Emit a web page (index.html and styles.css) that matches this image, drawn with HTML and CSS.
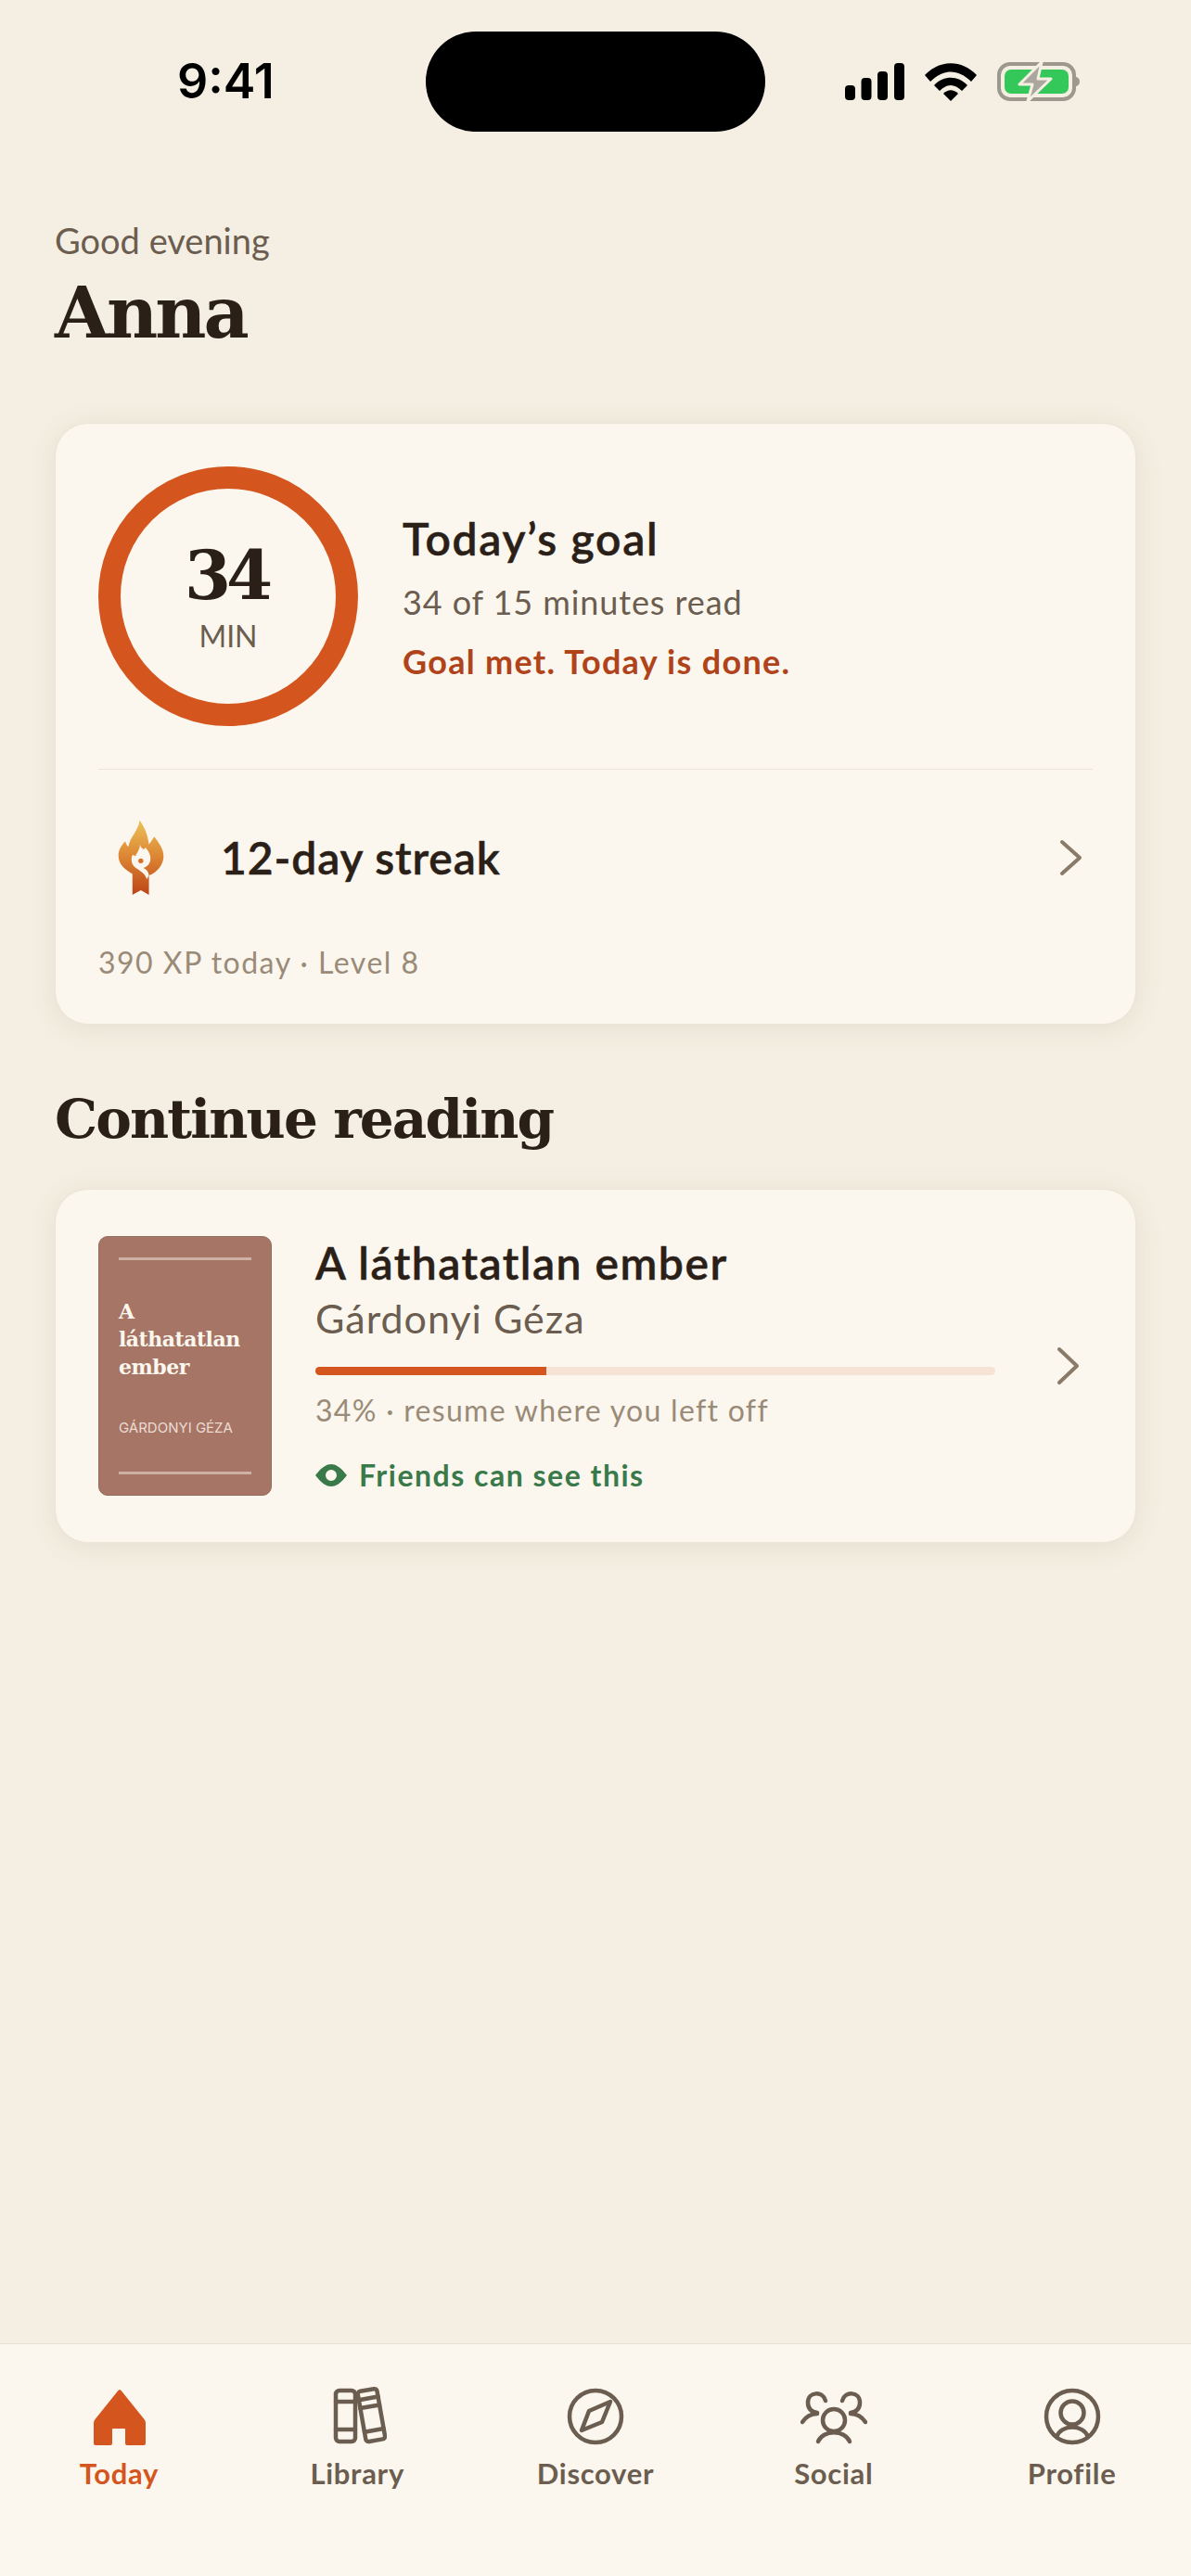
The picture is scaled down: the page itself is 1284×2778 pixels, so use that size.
FILE: index.html
```html
<!DOCTYPE html>
<html>
<head>
  <meta charset="UTF-8">
  <title>Today</title>
  <link rel="stylesheet" href="styles.css">
</head>
<body>
  <div class="status-bar">
    <div class="clock">9:41</div>
    <div class="island"></div>
    <div class="status-icons">
      <svg width="64" height="40" viewBox="0 0 64 40"><rect x="0" y="24" width="11" height="16" rx="4"/><rect x="17.500" y="16" width="11" height="24" rx="4"/><rect x="35" y="9" width="11" height="31" rx="4"/><rect x="53" y="0" width="11" height="40" rx="4"/></svg>
      <svg width="56" height="42" viewBox="0 0 56 42"><path d="M0 14 C16 -3 40 -3 56 14 L50 21 C36 7 20 7 6 21 Z"/><path d="M10 25 C20 14 36 14 46 25 L40 31 C32 23 24 23 16 31 Z"/><path d="M20 34 C25 29 31 29 36 34 L28 42 Z"/></svg>
      <svg width="90" height="44" viewBox="0 0 90 44">
        <rect x="2" y="3" width="81" height="38" rx="12" fill="none" stroke="#9c988e" stroke-width="4"/>
        <rect x="8" y="9" width="69" height="26" rx="7" fill="#34c759"/>
        <path d="M83 16 C87 17 89 19 89 22 C89 25 87 27 83 28 Z" fill="#9c988e"/>
        <path d="M48 1 L24 25 L38 25 L33 43 L58 19 L44 19 Z" fill="#aca79e" stroke="#f5efe3" stroke-width="3" stroke-linejoin="round"/>
      </svg>
    </div>
  </div>

  <header class="greeting">
    <div class="hello">Good evening</div>
    <h1 class="name">Anna</h1>
  </header>

  <section class="card goal-card">
    <div class="goal-top">
      <div class="ring">
        <div class="ring-num">34</div>
        <div class="ring-unit">MIN</div>
      </div>
      <div class="goal-text">
        <div class="goal-title">Today’s goal</div>
        <div class="goal-sub">34 of 15 minutes read</div>
        <div class="goal-done">Goal met. Today is done.</div>
      </div>
    </div>
    <div class="streak-row">
      <svg class="flame" width="52" height="84" viewBox="80 68 155 250">
        <defs>
          <linearGradient id="flameFill" x1="0" y1="0" x2="0" y2="1">
            <stop offset="0" stop-color="#ecc258"/>
            <stop offset="0.5" stop-color="#dc8433"/>
            <stop offset="1" stop-color="#bb4516"/>
          </linearGradient>
        </defs>
        <path fill="url(#flameFill)" d="M153 72 C165 90 178 110 183 150 C190 142 195 132 200 125 C215 145 231 165 230 190 C229 215 210 240 183 250 L183 312 L157 297 L130 312 L130 245 C105 230 85 215 85 185 C85 165 98 150 107 140 C110 150 113 155 117 157 C122 125 150 105 153 72 Z"/>
        <path fill="#fbf7ee" d="M154 150 C158 165 168 170 172 160 C185 175 192 190 186 207 C182 218 172 224 165 226 C175 230 182 238 183 250 L176 262 C172 245 155 235 140 225 C130 218 125 205 128 190 C130 180 135 185 140 188 C145 175 155 165 154 150 Z"/>
        <circle cx="157" cy="203" r="8" fill="#d9702a"/>
      </svg>
      <div class="streak-label">12-day streak</div>
      <svg class="chevron" width="26" height="40" viewBox="0 0 26 40"><path d="M3 3 L22 20 L3 37"/></svg>
    </div>
    <div class="xp-line">390 XP today · Level 8</div>
  </section>

  <h2 class="section-title">Continue reading</h2>

  <section class="card book-card">
    <div class="cover">
      <div class="cover-rule"></div>
      <div class="cover-body">
        <div class="cover-title">A<br>láthatatlan<br>ember</div>
        <div class="cover-author">GÁRDONYI GÉZA</div>
      </div>
      <div class="cover-rule"></div>
    </div>
    <div class="book-info">
      <div class="book-title">A láthatatlan ember</div>
      <div class="book-author">Gárdonyi Géza</div>
      <div class="progress"><div class="progress-fill" style="width: 34%"></div></div>
      <div class="book-meta">34% · resume where you left off</div>
      <div class="visibility">
        <svg width="34" height="24" viewBox="0 0 34 24"><path fill-rule="evenodd" d="M0 12 C7 3 12 0 17 0 C22 0 27 3 34 12 C27 21 22 24 17 24 C12 24 7 21 0 12 Z M17 6 A6 6 0 1 0 17 18 A6 6 0 1 0 17 6 Z"/></svg>
        <span>Friends can see this</span>
      </div>
    </div>
    <svg class="chevron" width="26" height="42" viewBox="0 0 26 42"><path d="M3 3 L22 21 L3 39"/></svg>
  </section>

  <nav class="tabbar">
    <div class="tab active">
      <svg width="64" height="64" viewBox="0 0 64 64"><path class="solid" d="M33 4 Q34 4 35 5.500 L59.500 36 Q61 38 61 40 L61 62 Q61 64 59 64 L41 64 Q39 64 39 62 L39 47 Q39 46 38 46 L26 46 Q25 46 25 47 L25 62 Q25 64 23 64 L7 64 Q5 64 5 62 L5 40 Q5 38 6.500 36 L31 5.500 Q32 4 33 4 Z"/></svg>
      <div class="tab-label">Today</div>
    </div>
    <div class="tab">
      <svg width="64" height="64" viewBox="0 0 64 64"><g class="line">
        <rect x="9" y="5" width="21" height="55" rx="4"/>
        <path d="M9 17 H30 M9 47 H30"/>
        <g transform="rotate(-10 48 32)">
          <rect x="37" y="4" width="21" height="55" rx="3"/>
          <path d="M37 13 H58 M37 22 H58 M37 48 H58"/>
        </g>
      </g></svg>
      <div class="tab-label">Library</div>
    </div>
    <div class="tab">
      <svg width="64" height="64" viewBox="0 0 64 64"><g class="line">
        <circle cx="32" cy="33" r="28"/>
        <path stroke-linejoin="round" d="M48 17 L39 39 L17 48 L25 27 Z"/>
      </g></svg>
      <div class="tab-label">Discover</div>
    </div>
    <div class="tab">
      <svg width="72" height="64" viewBox="0 0 72 64"><g class="line">
        <circle cx="36" cy="37" r="12"/>
        <path d="M19 60 C24 47 48 47 53 60"/>
        <path d="M27 16 C24 5 8 6 8 18 C8 25 12 28 18 29"/>
        <path d="M2 39 C6 33 11 30 18 30"/>
        <path d="M45 16 C48 5 64 6 64 18 C64 25 60 28 54 29"/>
        <path d="M70 39 C66 33 61 30 54 30"/>
      </g></svg>
      <div class="tab-label">Social</div>
    </div>
    <div class="tab">
      <svg width="64" height="64" viewBox="0 0 64 64"><g class="line">
        <circle cx="32" cy="33" r="28"/>
        <circle cx="32" cy="29" r="12.500"/>
        <path d="M15 55 C20 41 44 41 49 55"/>
      </g></svg>
      <div class="tab-label">Profile</div>
    </div>
  </nav>
</body>
</html>
```

FILE: styles.css
```css
* {
  box-sizing: border-box;
}
body {
  margin: 0;
  width: 1284px;
  height: 2778px;
  display: flex;
  flex-direction: column;
  background: #f5efe3;
  color: #2a2018;
  font-family: Lato, "Noto Sans", sans-serif;
  overflow: hidden;
}

/* status bar */
.status-bar {
  display: grid;
  grid-template-columns: 459px 366px 1fr;
  padding-top: 34px;
}
.clock {
  padding-left: 191px;
  font-family: Inter, sans-serif;
  font-weight: 600;
  font-size: 52px;
  line-height: 108px;
  color: #000;
}
.island {
  height: 108px;
  border-radius: 54px;
  background: #000;
}
.status-icons {
  display: flex;
  align-items: center;
  gap: 22px;
  padding-left: 86px;
}

/* greeting */
.greeting {
  padding: 92px 59px 0;
}
.hello {
  font-size: 38px;
  line-height: 50px;
  color: #6b5d4f;
}
.name {
  margin: 4px 0 0;
  font-family: "DejaVu Serif", serif;
  font-weight: 700;
  font-size: 76px;
  line-height: 100px;
  letter-spacing: -3px;
}

/* cards */
.card {
  margin: 0 59px;
  border: 1px solid #ece5d6;
  border-radius: 36px;
  background: #fbf7ee;
  box-shadow: 0 4px 30px rgba(90, 70, 40, 0.1);
}
.goal-card {
  margin-top: 68px;
  height: 649px;
  padding: 46px 46px 0;
}
.goal-top {
  display: flex;
  align-items: center;
  gap: 48px;
  height: 327px;
  padding-bottom: 46px;
  border-bottom: 1px solid #ebe4d4;
}
.ring {
  flex: none;
  width: 280px;
  height: 280px;
  border: 24px solid #d4561e;
  border-radius: 50%;
  display: flex;
  flex-direction: column;
  align-items: center;
  justify-content: center;
}
.ring-num {
  margin-left: -4px;
  font-family: "DejaVu Serif", serif;
  font-weight: 700;
  font-size: 72px;
  line-height: 82px;
  letter-spacing: -5px;
}
.ring-unit {
  margin-top: 4px;
  font-size: 32px;
  line-height: 40px;
  color: #6b5d4f;
}
.goal-title {
  font-weight: 600;
  font-size: 48px;
  line-height: 60px;
  letter-spacing: 1.7px;
  -webkit-text-stroke: 0.5px #2a2018;
}
.goal-sub {
  margin-top: 15px;
  font-size: 36px;
  line-height: 46px;
  letter-spacing: 0.9px;
  color: #6b5d4f;
}
.goal-done {
  margin-top: 18px;
  font-weight: 700;
  font-size: 36px;
  line-height: 46px;
  letter-spacing: 1.3px;
  color: #b0431a;
}
.streak-row {
  display: flex;
  align-items: center;
  height: 189px;
  padding-left: 20px;
}
.streak-label {
  margin-left: 60px;
  font-weight: 600;
  font-size: 48px;
  letter-spacing: 0.9px;
  -webkit-text-stroke: 0.5px #2a2018;
}
.streak-row .chevron {
  margin-right: 10px;
}
.chevron {
  margin-left: auto;
  fill: none;
  stroke: #8a7a68;
  stroke-width: 4;
  stroke-linecap: round;
  stroke-linejoin: round;
}
.xp-line {
  margin-top: -1px;
  font-size: 32px;
  line-height: 40px;
  letter-spacing: 1.5px;
  color: #9a8a78;
}

.section-title {
  margin: 63px 59px 36px;
  font-family: "DejaVu Serif", serif;
  font-weight: 700;
  font-size: 58px;
  line-height: 78px;
  letter-spacing: -1.9px;
}

/* book */
.book-card {
  display: flex;
  align-items: center;
  height: 382px;
  padding: 0 59px 0 46px;
}
.cover {
  flex: none;
  width: 187px;
  height: 280px;
  padding: 22px 21px;
  display: flex;
  flex-direction: column;
  border: 1px solid #976a5b;
  border-radius: 10px;
  background: #a67565;
}
.cover-rule {
  height: 3px;
  background: #cfb0a5;
}
.cover-body {
  flex: 1;
  padding-top: 40px;
}
.cover-title {
  font-family: "DejaVu Serif", serif;
  font-weight: 700;
  font-size: 22px;
  line-height: 30px;
  letter-spacing: -0.5px;
  color: #fbf7ee;
}
.cover-author {
  margin-top: 41px;
  font-family: Inter, sans-serif;
  font-size: 15px;
  line-height: 20px;
  color: #ecdcd4;
}
.book-info {
  flex: none;
  width: 733px;
  margin: -2px 0 0 47px;
}
.book-title {
  font-weight: 600;
  font-size: 48px;
  line-height: 56px;
  letter-spacing: 1.5px;
  -webkit-text-stroke: 0.5px #2a2018;
}
.book-author {
  margin-top: 6px;
  font-size: 43px;
  line-height: 52px;
  letter-spacing: 1px;
  color: #6b5d4f;
}
.progress {
  height: 9px;
  margin-top: 26px;
  border-radius: 5px;
  background: #f7e3d5;
  overflow: hidden;
}
.progress-fill {
  height: 100%;
  background: #d4561e;
}
.book-meta {
  margin-top: 18px;
  font-size: 32px;
  line-height: 40px;
  letter-spacing: 1.3px;
  color: #9a8a78;
}
.visibility {
  display: flex;
  align-items: center;
  gap: 13px;
  margin-top: 30px;
  font-weight: 700;
  font-size: 32px;
  line-height: 40px;
  letter-spacing: 1.5px;
  color: #3a7a4a;
  fill: #3a7a4a;
}

/* tab bar */
.tabbar {
  margin-top: auto;
  height: 251px;
  padding-top: 45px;
  display: grid;
  grid-template-columns: repeat(5, 1fr);
  border-top: 1px solid #e8e0d2;
  background: #fbf7ee;
}
.tab {
  display: flex;
  flex-direction: column;
  align-items: center;
  color: #6b5d4f;
}
.tab-label {
  margin-top: 10px;
  font-weight: 700;
  font-size: 31px;
  line-height: 40px;
  letter-spacing: 0.7px;
}
.tab.active {
  color: #d4561e;
}
.solid {
  fill: #d4561e;
}
.line {
  fill: none;
  stroke: #6b5d4f;
  stroke-width: 4.500;
  stroke-linecap: round;
}
```
